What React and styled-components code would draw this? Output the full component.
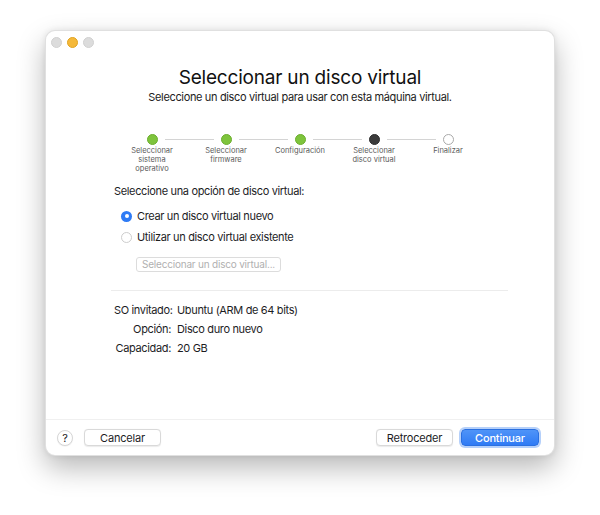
import React from 'react';
import styled, { createGlobalStyle, css } from 'styled-components';

const GlobalStyle = createGlobalStyle`
  html, body {
    margin: 0;
    padding: 0;
    background: #ffffff;
  }
  body {
    font-family: Inter, "Liberation Sans", sans-serif;
    color: #1d1d1f;
    -webkit-font-smoothing: antialiased;
  }
`;

const Page = styled.div`
  width: 600px;
  height: 515px;
  display: flex;
  justify-content: center;
  padding-top: 30px;
  box-sizing: border-box;
`;

const Window = styled.div`
  width: 510px;
  height: 426px;
  box-sizing: border-box;
  background: #fff;
  border-radius: 10px;
  border: 1px solid rgba(0, 0, 0, 0.12);
  box-shadow: 0 12px 28px rgba(0, 0, 0, 0.28), 0 0 6px rgba(0, 0, 0, 0.08);
  display: flex;
  flex-direction: column;
  overflow: hidden;
`;

const TitleBar = styled.div`
  height: 22px;
  display: flex;
  align-items: center;
  gap: 5px;
  padding-left: 5px;
`;

const Light = styled.span`
  width: 11px;
  height: 11px;
  border-radius: 50%;
  background: ${( { $active } ) => ( $active ? '#f5b93a' : '#dcdcdc' )};
  border: 0.5px solid ${( { $active } ) => ( $active ? '#e0a321' : '#d0d0d0' )};
  box-sizing: border-box;
`;

const Body = styled.div`
  flex: 1;
  display: flex;
  flex-direction: column;
  font-size: 11px;
  line-height: 14px;
  letter-spacing: -0.35px;
`;

const Header = styled.div`
  display: flex;
  flex-direction: column;
  align-items: center;
  padding-top: 13px;
`;

const Title = styled.h1`
  margin: 0;
  font-size: 19px;
  line-height: 24px;
  font-weight: 400;
  letter-spacing: -0.2px;
  color: #111;
`;

const Subtitle = styled.div`
  color: #222;
`;

const Stepper = styled.div`
  display: flex;
  justify-content: center;
  margin-top: 30px;
  letter-spacing: 0;
`;

const Step = styled.div`
  width: 74px;
  display: flex;
  flex-direction: column;
  align-items: center;
`;

const Track = styled.div`
  width: 100%;
  display: flex;
  align-items: center;
  height: 11px;
`;

const Segment = styled.span`
  flex: 1;
  height: 1px;
  background: ${( { $hidden } ) => ( $hidden ? 'transparent' : '#d4d4d4' )};
  ${( { $side } ) =>
    $side === 'left'
      ? css`margin-right: 7px;`
      : css`margin-left: 7px;`}
`;

const dotStates = {
  done: css`
    background: #7ec43c;
    border: 1px solid #6cae2e;
  `,
  current: css`
    background: #3b3b3b;
    border: 1px solid #2d2d2d;
  `,
  todo: css`
    background: #fff;
    border: 1px solid #a9a9a9;
  `,
};

const Dot = styled.span`
  width: 11px;
  height: 11px;
  border-radius: 50%;
  box-sizing: border-box;
  flex: none;
  ${( { $state } ) => dotStates[$state]};
`;

const StepLabel = styled.div`
  margin-top: 1px;
  font-size: 7.5px;
  line-height: 9px;
  color: #5a5a5a;
  text-align: center;
  white-space: pre-line;
`;

const Content = styled.div`
  padding-left: 68px;
  margin-top: 11px;
  display: flex;
  flex-direction: column;
`;

const Prompt = styled.div`
  color: #1d1d1f;
`;

const RadioList = styled.div`
  display: flex;
  flex-direction: column;
  gap: 7px;
  margin-top: 11px;
  padding-left: 7px;
`;

const RadioRow = styled.label`
  display: flex;
  align-items: center;
  gap: 5px;
`;

const RadioCircle = styled.span`
  width: 11px;
  height: 11px;
  border-radius: 50%;
  box-sizing: border-box;
  display: flex;
  align-items: center;
  justify-content: center;
  ${( { $checked } ) =>
    $checked
      ? css`
          background: #2f7bf5;
          &::after {
            content: '';
            width: 4px;
            height: 4px;
            border-radius: 50%;
            background: #fff;
          }
        `
      : css`
          background: #fff;
          border: 1px solid #cdcdcd;
        `}
`;

const PickButton = styled.button`
  margin: 13px 0 0 22px;
  align-self: flex-start;
  font-family: inherit;
  font-size: 10px;
  line-height: 13px;
  letter-spacing: -0.2px;
  white-space: nowrap;
  padding: 0;
  height: 15px;
  width: 145px;
  color: #b0b0b0;
  background: #fff;
  border: 1px solid #dcdcdc;
  border-radius: 3px;
`;

const Divider = styled.hr`
  margin: 18px 46px 0 65px;
  border: none;
  height: 1px;
  background: #ececec;
`;

const InfoGrid = styled.div`
  display: grid;
  grid-template-columns: 57px max-content;
  column-gap: 6px;
  row-gap: 5px;
  margin: 12px 0 0 68px;
`;

const InfoLabel = styled.span`
  text-align: right;
  white-space: nowrap;
`;

const InfoValue = styled.span``;

const Footer = styled.div`
  margin-top: auto;
  height: 35px;
  border-top: 1px solid #f0f0f0;
  display: flex;
  align-items: center;
  justify-content: space-between;
  padding: 0 15px 0 11px;
  letter-spacing: 0;
`;

const ButtonGroup = styled.div`
  display: flex;
  align-items: center;
  gap: ${( { $gap } ) => $gap}px;
`;

const HelpButton = styled.button`
  width: 16px;
  height: 16px;
  border-radius: 50%;
  border: 1px solid #d6d6d6;
  background: #fff;
  font-family: inherit;
  font-size: 11px;
  line-height: 14px;
  padding: 0;
  color: #222;
  box-shadow: 0 0.5px 1px rgba(0, 0, 0, 0.08);
`;

const Button = styled.button`
  height: 17px;
  box-sizing: border-box;
  font-family: inherit;
  font-size: 11px;
  line-height: 14px;
  letter-spacing: -0.2px;
  padding: 0;
  border-radius: 4px;
  width: ${( { $w } ) => $w}px;
  ${( { $primary } ) =>
    $primary
      ? css`
          color: #fff;
          font-weight: 500;
          background: linear-gradient(#4f94f8, #2f7bf5);
          border: 1px solid #2a70e0;
          box-shadow: 0 0 0 2px rgba(90, 150, 245, 0.45);
        `
      : css`
          color: #1d1d1f;
          background: #fff;
          border: 1px solid #d9d9d9;
          box-shadow: 0 0.5px 1px rgba(0, 0, 0, 0.08);
        `}
`;

const steps = [
  { label: 'Seleccionar\nsistema\noperativo', state: 'done' },
  { label: 'Seleccionar\nfirmware', state: 'done' },
  { label: 'Configuración', state: 'done' },
  { label: 'Seleccionar\ndisco virtual', state: 'current' },
  { label: 'Finalizar', state: 'todo' },
];

const info = [
  [ 'SO invitado:', 'Ubuntu (ARM de 64 bits)' ],
  [ 'Opción:', 'Disco duro nuevo' ],
  [ 'Capacidad:', '20 GB' ],
];

export default function App () {
  return (
    <Page>
      <GlobalStyle />
      <Window>
        <TitleBar>
          <Light />
          <Light $active />
          <Light />
        </TitleBar>
        <Body>
          <Header>
            <Title>Seleccionar un disco virtual</Title>
            <Subtitle>Seleccione un disco virtual para usar con esta máquina virtual.</Subtitle>
          </Header>

          <Stepper>
            {steps.map( ( s, i ) => (
              <Step key={ s.label }>
                <Track>
                  <Segment $side="left" $hidden={ i === 0 } />
                  <Dot $state={ s.state } />
                  <Segment $side="right" $hidden={ i === steps.length - 1 } />
                </Track>
                <StepLabel>{s.label}</StepLabel>
              </Step>
            ) )}
          </Stepper>

          <Content>
            <Prompt>Seleccione una opción de disco virtual:</Prompt>
            <RadioList>
              <RadioRow>
                <RadioCircle $checked />
                Crear un disco virtual nuevo
              </RadioRow>
              <RadioRow>
                <RadioCircle />
                Utilizar un disco virtual existente
              </RadioRow>
            </RadioList>
            <PickButton disabled>Seleccionar un disco virtual...</PickButton>
          </Content>

          <Divider />

          <InfoGrid>
            {info.map( ( [ k, v ] ) => (
              <React.Fragment key={ k }>
                <InfoLabel>{k}</InfoLabel>
                <InfoValue>{v}</InfoValue>
              </React.Fragment>
            ) )}
          </InfoGrid>

          <Footer>
            <ButtonGroup $gap={ 11 }>
              <HelpButton>?</HelpButton>
              <Button $w={ 77 }>Cancelar</Button>
            </ButtonGroup>
            <ButtonGroup $gap={ 8 }>
              <Button $w={ 77 }>Retroceder</Button>
              <Button $w={ 78 } $primary>Continuar</Button>
            </ButtonGroup>
          </Footer>
        </Body>
      </Window>
    </Page>
  );
}
